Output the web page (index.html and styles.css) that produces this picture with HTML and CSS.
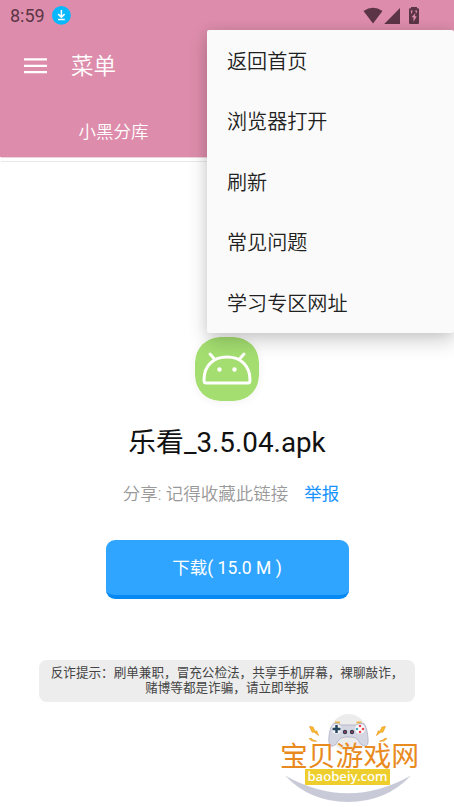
FILE: index.html
```html
<!DOCTYPE html>
<html lang="zh-CN">
<head>
<meta charset="utf-8">
<title>乐看_3.5.04.apk</title>
<link rel="stylesheet" href="styles.css">
</head>
<body>
<div class="screen">
  <header class="header">
    <div class="status">
      <span class="clock">8:59</span>
      <svg class="download-badge" width="20" height="20" viewBox="0 0 20 20"><circle cx="9.400" cy="9.400" r="9.400" fill="#08b8ff"/><path d="M9.400 4v7M6.200 8.100l3.200 3.200 3.200-3.200M6 13.600h6.800" fill="none" stroke="#fff" stroke-width="1.500"/></svg>
      <svg class="system-icons" width="58" height="20" viewBox="362 5 58 20" fill="#5b3546"><path d="M363.500 10Q373 3.500 382.500 10L373 22.500z"/><path d="M384.200 23H400V7z"/><path d="M411 7.200V6h6v1.200h1q1 0 1 1V22q0 1-1 1h-8q-1 0-1-1V8.200q0-1 1-1z"/><path d="M415.500 12l-4 4.200h2v4.500l3.200-5.500h-2zM410.700 9.500h2l-1.200 4zM415 9.500h2.200l-.7 3z" fill="#dd8dab"/></svg>
    </div>
    <div class="toolbar">
      <svg width="24" height="16" viewBox="0 0 24 16"><path d="M0 1.300h23M0 7.800h23M0 14.200h23" stroke="#fff" stroke-width="2.300"/></svg>
      <h1 class="toolbar-title">菜单</h1>
    </div>
    <nav class="tabs"><span class="tab">小黑分库</span></nav>
  </header>
  <div class="divider"></div>
  <main class="content">
    <svg class="app-icon" width="64" height="64" viewBox="0 0 64 64"><rect width="64" height="64" rx="25" fill="#a4de70"/><g fill="none" stroke="#fff" stroke-width="3" stroke-linecap="round" stroke-linejoin="round"><path d="M9 43C9 28 19 20 32 20S55 28 55 43Q55 46 53 46H11Q9 46 9 43z"/><path d="M19.500 22l-4.500-5M44.500 22l4.500-5"/></g><circle cx="24.500" cy="32.500" r="2.200" fill="#fff"/><circle cx="39.500" cy="32.500" r="2.200" fill="#fff"/></svg>
    <h2 class="file-name">乐看_3.5.04.apk</h2>
    <p class="share"><span>分享: 记得收藏此链接</span><a class="report">举报</a></p>
    <button class="download">下载( 15.0 M )</button>
    <p class="notice">反诈提示：刷单兼职，冒充公检法，共享手机屏幕，裸聊敲诈，<br>赌博等都是诈骗，请立即举报</p>
  </main>
  <ul class="menu">
    <li>返回首页</li>
    <li>浏览器打开</li>
    <li>刷新</li>
    <li>常见问题</li>
    <li>学习专区网址</li>
  </ul>
  <div class="watermark">
    <svg width="150" height="94" viewBox="275 710 150 94">
      <circle cx="348.500" cy="732.500" r="18.500" fill="#ececec"/>
      <path d="M285 775.500Q348 811 411 775.500Q386 802 348 802T285 775.500z" fill="#c8cad8"/>
      <path d="M335 722.500h5M356.500 722.500h5" stroke="#e9b44a" stroke-width="2"/>
      <path d="M334 723.500Q338 722.500 341 725H356Q360 722.500 364 723.500Q367 727 368 738Q369 747 364 746Q360 745 358 740Q356 737 351 737H346Q340 737 338 741Q335 747 331 746Q328 744 329 736Q330 726 334 723.500z" fill="#d4d6e2" stroke="#a8abc0" stroke-width=".7"/>
      <circle cx="336.500" cy="729" r="4.800" fill="#f4f5fa"/><path d="M336.500 725v8M332.500 729h8" stroke="#29475e" stroke-width="2.500"/>
      <circle cx="360" cy="729" r="4.800" fill="#fff"/><circle cx="360" cy="726" r="1.300" fill="#ed4554"/><circle cx="357" cy="729" r="1.300" fill="#4aa9c9"/><circle cx="363" cy="729" r="1.300" fill="#ed4554"/><circle cx="360" cy="732" r="1.300" fill="#ed4554"/>
      <circle cx="345" cy="732" r="2.200" fill="#35394f"/><circle cx="352" cy="732" r="2.200" fill="#35394f"/><circle cx="345" cy="732" r=".8" fill="#ed4554"/><circle cx="352" cy="732" r=".8" fill="#ed4554"/>
      <path d="M309.500 726.500l3.500.5 2 4.200 1.800-.3 1.700 4.600-4.500-3.500-1.800.3zM385.500 726.500l-3.500.5-2 4.200-1.800-.3-1.700 4.600 4.500-3.500 1.800.3zM309 738.500l3 .2 1.500 1.500 3 1-4.500-.1zM387 738.500l-3 .2-1.500 1.500-3 1 4.500-.1z" fill="#f6bd27" stroke="#ed982d" stroke-width=".7"/>
    </svg>
    <span class="site-name">宝贝游戏网</span>
    <span class="site-url">baobeiy.com</span>
  </div>
</div>
</body>
</html>
```
FILE: styles.css
```css
* { box-sizing: border-box; }
body, h1, h2, p, ul { margin: 0; padding: 0; }
body { background: #fff; font-family: Roboto, "Noto Sans CJK SC", sans-serif; }
.screen { position: relative; width: 454px; height: 807px; overflow: hidden; }
.header { height: 157px; background: #dd8dab; color: #fff; }
.status { height: 31px; padding: 0 34px 0 10px; display: flex; align-items: center; }
.clock { width: 42px; color: #5b3546; font-size: 18px; line-height: 31px; }
.system-icons { margin-left: auto; }
.toolbar { height: 70px; padding-left: 24px; display: flex; align-items: center; gap: 23px; }
.toolbar-title { font-size: 22.500px; line-height: 32px; font-weight: 350; }
.tabs { display: flex; height: 56px; }
.tab { width: 227px; padding-top: 19px; text-align: center; font-size: 17.500px; line-height: 25px; font-weight: 350; }
.divider { height: 5px; margin-left: 1px; border-top: 1px solid #edd4dd; border-bottom: 1px solid #e9e9e9; background: #fff; }
.content { display: flex; flex-direction: column; align-items: center; padding-top: 175px; }
.app-icon { display: block; border-radius: 25px; box-shadow: 0 1px 10px #0000000f; }
.file-name { margin-top: 22px; color: #111; font-size: 27.800px; line-height: 40px; font-weight: 400; }
.share { display: flex; gap: 16px; margin-top: 19px; padding-left: 8px; color: #999; font-size: 17.500px; line-height: 24px; font-weight: 350; }
.report { color: #1593ff; font-weight: 400; }
.download { width: 243px; height: 59px; margin-top: 34px; padding: 0; border: 0; border-bottom: 4px solid #0789f4; border-radius: 9px; background: #30a5ff; color: #fff; font: 17.500px/24px Roboto, "Noto Sans CJK SC", sans-serif; }
.notice { width: 376px; height: 42px; margin-top: 61px; padding-top: 5px; border-radius: 8px; background: #ededed; color: #444; font-size: 12.600px; line-height: 15px; text-align: center; white-space: nowrap; }
.menu { position: absolute; top: 30px; left: 207px; width: 247px; height: 303px; padding-top: 1.500px; border-radius: 2px; background: #fafafa; box-shadow: 0 8px 20px #00000030, 0 0 12px #00000014; list-style: none; color: #212121; }
.menu li { height: 60.500px; padding-left: 20px; font-size: 20.100px; line-height: 60px; font-weight: 350; }
.watermark { position: absolute; left: 275px; top: 710px; width: 150px; height: 94px; }
.site-name { position: absolute; left: 5px; top: 31px; color: #e98a20; font: 27.800px/27px "Noto Sans CJK SC", sans-serif; white-space: nowrap; }
.site-url { position: absolute; left: 30px; top: 59px; width: 85px; height: 16px; background: #edce2c; color: #fff; font: 500 13.200px/15px "Noto Sans", sans-serif; text-align: center; }
```
